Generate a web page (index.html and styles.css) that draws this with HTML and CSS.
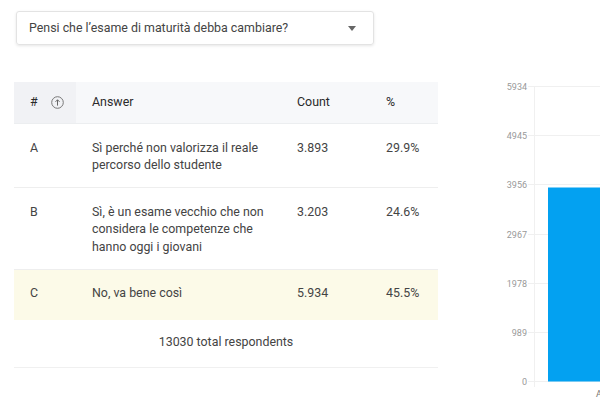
FILE: index.html
```html
<!DOCTYPE html>
<html>
<head>
<meta charset="utf-8">
<link rel="stylesheet" href="styles.css">
</head>
<body>
<div class="page">
  <div class="left">
    <div class="select">
      <span class="select-text">Pensi che l’esame di maturità debba cambiare?</span>
      <span class="caret"></span>
    </div>
    <div class="table">
      <div class="row head">
        <div class="cell c1">#
          <svg class="sort" width="13" height="13" viewBox="0 0 13 13"><circle cx="6.5" cy="6.5" r="5.8" fill="none" stroke="#777" stroke-width="1"/><path d="M6.5 9.6V3.8M4.5 5.8L6.5 3.8l2 2" fill="none" stroke="#666" stroke-width="1"/></svg>
        </div>
        <div class="cell c2">Answer</div>
        <div class="cell c3">Count</div>
        <div class="cell c4">%</div>
      </div>
      <div class="row">
        <div class="cell c1">A</div>
        <div class="cell c2">Sì perché non valorizza il reale percorso dello studente</div>
        <div class="cell c3">3.893</div>
        <div class="cell c4">29.9%</div>
      </div>
      <div class="row">
        <div class="cell c1">B</div>
        <div class="cell c2">Sì, è un esame vecchio che non considera le competenze che hanno oggi i giovani</div>
        <div class="cell c3">3.203</div>
        <div class="cell c4">24.6%</div>
      </div>
      <div class="row hl">
        <div class="cell c1">C</div>
        <div class="cell c2">No, va bene così</div>
        <div class="cell c3">5.934</div>
        <div class="cell c4">45.5%</div>
      </div>
      <div class="foot">13030 total respondents</div>
    </div>
  </div>
  <div class="chart">
    <svg width="110" height="325" viewBox="0 0 110 325">
      <g class="grid">
        <line x1="38" y1="11.5" x2="110" y2="11.5"/>
        <line x1="38" y1="60.5" x2="110" y2="60.5"/>
        <line x1="38" y1="109.5" x2="110" y2="109.5"/>
        <line x1="38" y1="159.5" x2="110" y2="159.5"/>
        <line x1="38" y1="208.5" x2="110" y2="208.5"/>
        <line x1="38" y1="257.5" x2="110" y2="257.5"/>
        <line x1="38" y1="306.5" x2="110" y2="306.5"/>
        <line x1="44.5" y1="11" x2="44.5" y2="312"/>
      </g>
      <rect x="58" y="112.5" width="52" height="194" fill="#03a1f1"/>
      <g class="ylab">
        <text x="37" y="14.5">5934</text>
        <text x="37" y="63.5">4945</text>
        <text x="37" y="112.5">3956</text>
        <text x="37" y="162.5">2967</text>
        <text x="37" y="211.5">1978</text>
        <text x="37" y="260.5">989</text>
        <text x="37" y="309.5">0</text>
      </g>
      <text class="xlab" x="106" y="322">A</text>
    </svg>
  </div>
</div>
</body>
</html>
```
FILE: styles.css
```css
html, body {
  margin: 0;
  padding: 0;
  background: #fff;
}
body {
  font-family: Roboto, "Liberation Sans", Arial, sans-serif;
  color: #444;
  font-size: 12.4px;
  width: 600px;
  height: 400px;
  overflow: hidden;
}
.page {
  display: flex;
  align-items: flex-start;
}
.left {
  width: 424px;
  padding-left: 14px;
  flex: none;
}
.select {
  margin: 11px 0 0 2px;
  width: 358px;
  height: 34px;
  box-sizing: border-box;
  border: 1px solid #e3e3e3;
  border-radius: 3px;
  box-shadow: 0 1px 3px rgba(0,0,0,0.10);
  display: flex;
  align-items: center;
  justify-content: space-between;
  padding: 0 17px 0 12px;
}
.select-text {
  font-size: 12.4px;
  color: #444;
  padding-bottom: 2px;
}
.caret {
  width: 0;
  height: 0;
  border-left: 4px solid transparent;
  border-right: 4px solid transparent;
  border-top: 5px solid #666;
}
.table {
  margin-top: 37px;
}
.row {
  display: grid;
  grid-template-columns: 62px 205px 89px 68px;
  border-bottom: 1px solid #eeeeee;
  min-height: 49px;
  box-sizing: border-box;
}
.cell {
  padding: 14.5px 16px 13.5px 16px;
  line-height: 17.5px;
}
.cell.c2 {
  padding-right: 8px;
}
.head {
  background: #f7f8fa;
  min-height: 42px;
  height: 42px;
  border-bottom: 1px solid #eceef0;
}
.head .cell {
  padding-top: 11px;
  padding-bottom: 0;
  font-weight: 400;
  color: #2a2a2a;
}
.head .c1 {
  background: #f1f2f5;
  display: flex;
  align-items: flex-start;
  gap: 13px;
}
.sort {
  flex: none;
  margin-top: 3px;
}
.hl {
  background: #fcfae8;
  min-height: 50px;
  border-bottom: none;
}
.foot {
  text-align: center;
  height: 48px;
  line-height: 18px;
  padding-top: 13px;
  box-sizing: border-box;
  border-bottom: 1px solid #f0f0f0;
}
.chart {
  margin-top: 75px;
  margin-left: 52px;
  flex: none;
}
.chart svg {
  display: block;
}
.grid line {
  stroke: #f0f0f0;
  stroke-width: 1;
}
.ylab text {
  font-family: Roboto, "Liberation Sans", sans-serif;
  font-size: 9px;
  fill: #999;
  text-anchor: end;
}
.xlab {
  font-family: Roboto, "Liberation Sans", sans-serif;
  font-size: 9px;
  fill: #777;
}
```
